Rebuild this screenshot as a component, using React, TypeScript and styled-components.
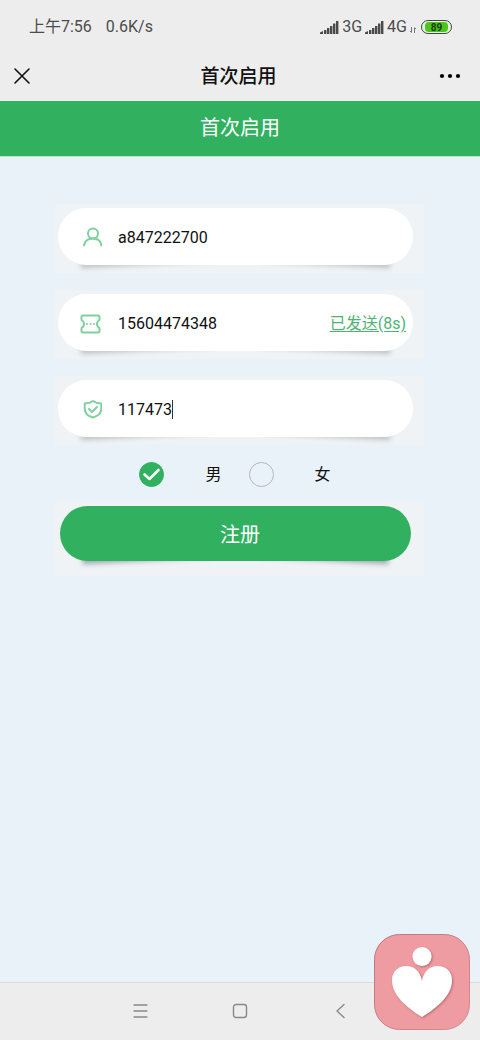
import React, { useState } from "react";
import styled, { createGlobalStyle, css } from "styled-components";

const GREEN = "#31b160";
const LINE_GREEN = "#7fd09f";

const GlobalStyle = createGlobalStyle`
  *, *::before, *::after { box-sizing: border-box; }
  body {
    margin: 0;
    background: #eaf2f9;
    font-family: Roboto, "Noto Sans CJK SC", sans-serif;
    color: #111;
  }
  button, input { font: inherit; color: inherit; }
`;

const Page = styled.div`
  position: relative;
  display: flex;
  flex-direction: column;
  min-height: 100vh;
`;

const StatusBar = styled.div`
  display: flex;
  align-items: center;
  justify-content: space-between;
  height: 52px;
  padding: 2px 28px 0 29px;
  background: #ededed;
  color: #4c4c4c;
  font-size: 16px;
  line-height: 24px;
`;

const StatusGroup = styled.div<{ $gap: number }>`
  display: flex;
  align-items: center;
  gap: ${(p) => p.$gap}px;
`;

const Battery = styled.span`
  display: flex;
  width: 31px;
  height: 14px;
  padding: 1px 3px;
  border: 1px solid #444;
  border-radius: 7px;
  background: #e4f5dc;
`;

const BatteryLevel = styled.span`
  flex: 1;
  border-radius: 4px;
  background: #4cc61c;
  color: #1c3a10;
  font-size: 10px;
  font-weight: 700;
  line-height: 11px;
  text-align: center;
`;

const TitleBar = styled.header`
  display: grid;
  grid-template-columns: 1fr auto 1fr;
  align-items: center;
  height: 49px;
  padding: 0 16px 2px 13px;
  background: #ededed;
`;

const PageTitle = styled.h1`
  margin: 0;
  padding-top: 2px;
  font-size: 19px;
  font-weight: 500;
  line-height: 28px;
`;

const IconButton = styled.button<{ $end?: boolean }>`
  display: flex;
  justify-self: ${(p) => (p.$end ? "end" : "start")};
  padding: 0;
  border: 0;
  background: none;
  cursor: pointer;
`;

const Banner = styled.h2`
  height: 56px;
  margin: 0;
  padding-top: 13px;
  border-bottom: 1px solid #b9e2ce;
  background: ${GREEN};
  color: #fff;
  font-size: 20px;
  font-weight: 400;
  line-height: 28px;
  text-align: center;
`;

const Form = styled.form`
  display: flex;
  flex: 1;
  flex-direction: column;
  padding: 47px 56px 0 55px;
`;

const FieldList = styled.div`
  display: flex;
  flex-direction: column;
  gap: 17px;
`;

const liftedCorners = css<{ $strong?: boolean }>`
  &::before,
  &::after {
    content: "";
    position: absolute;
    z-index: -2;
    bottom: 8px;
    width: 36%;
    height: 16px;
    box-shadow: 0 8px 5px ${(p) => (p.$strong ? "rgba(60, 80, 90, .45)" : "rgba(90, 95, 105, .32)")};
  }
  &::before {
    left: 22px;
    transform: rotate(-3deg);
  }
  &::after {
    right: 22px;
    transform: rotate(3deg);
  }
`;

const Plate = styled.div<{ $tall?: boolean }>`
  isolation: isolate;
  padding: ${(p) => (p.$tall ? "4px 13px 15px 5px" : "4px 11px 8px 3px")};
  background: #eff3f5;
`;

const Pill = styled.div`
  position: relative;
  display: flex;
  align-items: center;
  height: 57px;
  padding: 0 7px 0 20px;
  ${liftedCorners}
`;

const PillFace = styled.div`
  position: absolute;
  z-index: -1;
  inset: 0;
  border-radius: 29px;
  background: #fff;
`;

const FieldIcon = styled.label`
  display: flex;
  flex: none;
  width: 40px;
`;

const InputBox = styled.div`
  position: relative;
  flex: 1;
  min-width: 0;
  padding-top: 2px;
  font-size: 16px;
`;

const TextInput = styled.input`
  display: block;
  width: 100%;
  height: 24px;
  padding: 0;
  border: 0;
  outline: 0;
  background: none;
  color: #111;
`;

const Caret = styled.span`
  position: absolute;
  top: 4px;
  left: 6ch;
  width: 1px;
  height: 19px;
  background: #333;
`;

const CodeButton = styled.button`
  padding: 2px 0 0;
  border: 0;
  background: none;
  color: #4fb377;
  font-size: 16px;
  line-height: 24px;
  text-decoration: underline;
  text-underline-offset: 2px;
  cursor: pointer;
`;

const Choices = styled.div`
  display: flex;
  justify-content: center;
  gap: 27px;
  padding: 17px 12px 15px 3px;
`;

const Choice = styled.label`
  position: relative;
  display: flex;
  align-items: center;
  gap: 41px;
  font-size: 16px;
  line-height: 25px;
`;

const ChoiceText = styled.span`
  padding-top: 1px;
  line-height: 24px;
`;

const Radio = styled.input`
  appearance: none;
  width: 25px;
  height: 25px;
  margin: 0;
  border: 1px solid #b4b8bd;
  border-radius: 50%;
  &:checked {
    border-color: ${GREEN};
    background: ${GREEN};
  }
`;

const Tick = styled.svg`
  position: absolute;
  top: 0;
  left: 0;
  pointer-events: none;
`;

const Submit = styled.button<{ $strong?: boolean }>`
  position: relative;
  display: block;
  width: 100%;
  height: 55px;
  padding: 0;
  border: 0;
  background: none;
  color: #fff;
  font-size: 20px;
  cursor: pointer;
  ${liftedCorners}
`;

const SubmitFace = styled.span`
  display: block;
  padding: 3px 0 0 9px;
  border-radius: 28px;
  background: ${GREEN};
  line-height: 52px;
`;

const NavBar = styled.nav`
  display: grid;
  grid-template-columns: repeat(3, 100px);
  justify-content: center;
  justify-items: center;
  align-items: center;
  height: 58px;
  padding-bottom: 2px;
  border-top: 1px solid #dcdcdc;
  background: #ededed;
`;

const NavButton = styled.button`
  display: flex;
  padding: 0;
  border: 0;
  background: none;
`;

const Badge = styled.svg`
  position: absolute;
  right: 10px;
  bottom: 10px;
`;

const Signal = () => (
  <svg width="19" height="13" viewBox="0 0 19 13" fill="#4a4a4a" aria-hidden="true">
    <path d="M0 13v-1.500l3-1.500v3z" />
    <rect x="4" y="9" width="2.400" height="4" />
    <rect x="7" y="7" width="2.400" height="6" />
    <rect x="10" y="5" width="2.400" height="8" />
    <rect x="13" y="2.500" width="2.400" height="10.500" />
    <rect x="16" y="0" width="2.400" height="13" />
  </svg>
);

const line = {
  width: 24,
  height: 24,
  viewBox: "0 0 24 24",
  fill: "none",
  stroke: LINE_GREEN,
  strokeWidth: 2,
  strokeLinecap: "round" as const,
  strokeLinejoin: "round" as const,
};

const UserIcon = () => (
  <svg {...line}>
    <circle cx="15" cy="8.500" r="5" />
    <path d="M6 20.500c.8-4.500 4.400-7 9-7s7.700 2.500 8.500 7" />
  </svg>
);

const TicketIcon = () => (
  <svg {...line}>
    <path d="M5 4.500h15a1.500 1.500 0 0 1 1.500 1.500v3c-1.800 1-2.500 2.300-2.500 4s.7 3 2.500 4v3a1.500 1.500 0 0 1-1.500 1.500H5A1.500 1.500 0 0 1 3.500 20v-3C5.300 16 6 14.700 6 13s-.7-3-2.500-4V6A1.500 1.500 0 0 1 5 4.500z" />
    <path d="M9 13h.1M12.500 13h.1M16 13h.1" />
  </svg>
);

const ShieldIcon = () => (
  <svg {...line}>
    <path d="M15 4c-2.500 1.700-5.300 2.400-8.300 2.500V12c0 4.500 3.800 7.200 8.300 8.500 4.500-1.300 8.300-4 8.300-8.500V6.500C20.300 6.400 17.500 5.700 15 4z" />
    <path d="M11 12l3 3 5-5" />
  </svg>
);

type FieldProps = {
  id: string;
  label: string;
  icon: React.ReactNode;
  initial: string;
  active?: boolean;
  children?: React.ReactNode;
};

const Field = ({ id, label, icon, initial, active, children }: FieldProps) => {
  const [value, setValue] = useState(initial);
  return (
    <Plate>
      <Pill>
        <PillFace />
        <FieldIcon htmlFor={id} aria-label={label}>{icon}</FieldIcon>
        <InputBox>
          <TextInput id={id} aria-label={label} value={value} onChange={(e) => setValue(e.target.value)} />
          {active && value === initial && <Caret />}
        </InputBox>
        {children}
      </Pill>
    </Plate>
  );
};

export default function App() {
  const [gender, setGender] = useState("男");
  return (
    <Page>
      <GlobalStyle />
      <StatusBar>
        <StatusGroup $gap={14}>
          <span>上午7:56</span>
          <span>0.6K/s</span>
        </StatusGroup>
        <StatusGroup $gap={3}>
          <Signal />
          <span>3G</span>
          <Signal />
          <span>4G</span>
          <svg width="8" height="13" viewBox="0 0 8 13" fill="none" stroke="#777" aria-hidden="true">
            <path d="M1.500 6v5.500M0 10l1.500 1.500M4.500 12V7M4.500 6.500L6 8" />
          </svg>
          <Battery><BatteryLevel>89</BatteryLevel></Battery>
        </StatusGroup>
      </StatusBar>
      <TitleBar>
        <IconButton type="button" aria-label="关闭">
          <svg width="18" height="18" viewBox="0 0 18 18" stroke="#111" strokeWidth="1.600" strokeLinecap="round">
            <path d="M2 2l14 14M16 2L2 16" />
          </svg>
        </IconButton>
        <PageTitle>首次启用</PageTitle>
        <IconButton type="button" $end aria-label="更多">
          <svg width="28" height="6" viewBox="0 0 28 6" fill="#000">
            <circle cx="6" cy="3" r="2.100" />
            <circle cx="14" cy="3" r="2.100" />
            <circle cx="22" cy="3" r="2.100" />
          </svg>
        </IconButton>
      </TitleBar>
      <Banner>首次启用</Banner>
      <Form onSubmit={(e) => e.preventDefault()}>
        <FieldList>
          <Field id="name" label="用户名" icon={<UserIcon />} initial="a847222700" />
          <Field id="phone" label="手机号" icon={<TicketIcon />} initial="15604474348">
            <CodeButton type="button">已发送(8s)</CodeButton>
          </Field>
          <Field id="code" label="验证码" icon={<ShieldIcon />} initial="117473" active />
        </FieldList>
        <Choices>
          {["男", "女"].map((g) => (
            <Choice key={g}>
              <Radio type="radio" name="gender" checked={gender === g} onChange={() => setGender(g)} />
              {gender === g && (
                <Tick width="25" height="25" viewBox="0 0 25 25" fill="none" stroke="#fff" strokeWidth="2.600" strokeLinecap="round" strokeLinejoin="round">
                  <path d="M5.500 12.500l5 4.500 9-9" />
                </Tick>
              )}
              <ChoiceText>{g}</ChoiceText>
            </Choice>
          ))}
        </Choices>
        <Plate $tall>
          <Submit type="submit" $strong>
            <SubmitFace>注册</SubmitFace>
          </Submit>
        </Plate>
      </Form>
      <NavBar>
        <NavButton type="button" aria-label="菜单">
          <svg width="16" height="16" viewBox="0 0 16 16" stroke="#888" strokeWidth="1.300" strokeLinecap="round">
            <path d="M2 2h13M2 8h13M2 14h13" />
          </svg>
        </NavButton>
        <NavButton type="button" aria-label="主页">
          <svg width="16" height="16" viewBox="0 0 16 16" fill="none" stroke="#888" strokeWidth="1.400">
            <rect x="1.500" y="1.500" width="13" height="13" rx="2.500" />
          </svg>
        </NavButton>
        <NavButton type="button" aria-label="返回">
          <svg width="16" height="16" viewBox="0 0 16 16" fill="none" stroke="#888" strokeWidth="1.400" strokeLinecap="round" strokeLinejoin="round">
            <path d="M12 1.500L5 8l7 6.500" />
          </svg>
        </NavButton>
      </NavBar>
      <Badge width="96" height="96" viewBox="0 0 96 96" aria-hidden="true">
        <defs>
          <filter id="soft" x="-20%" y="-20%" width="140%" height="140%">
            <feDropShadow dx="1" dy="1" stdDeviation="1.200" floodColor="#8c4650" floodOpacity=".6" />
          </filter>
          <linearGradient id="rim" x1="0" y1="0" x2="1" y2="1">
            <stop offset="0" stopColor="#b9747b" />
            <stop offset="1" stopColor="#d08e93" />
          </linearGradient>
        </defs>
        <rect x=".5" y=".5" width="95" height="95" rx="25" fill="#ee9ba1" stroke="url(#rim)" />
        <g fill="#fff" filter="url(#soft)">
          <circle cx="48" cy="22.500" r="9.500" />
          <path d="M48 47C46 37 40 32 32.500 32 24 32 18 38 18 46c0 15 14 27 30 37 16-10 30-22 30-37 0-8-6-14-14.500-14C56 32 50 37 48 47z" />
        </g>
      </Badge>
    </Page>
  );
}
